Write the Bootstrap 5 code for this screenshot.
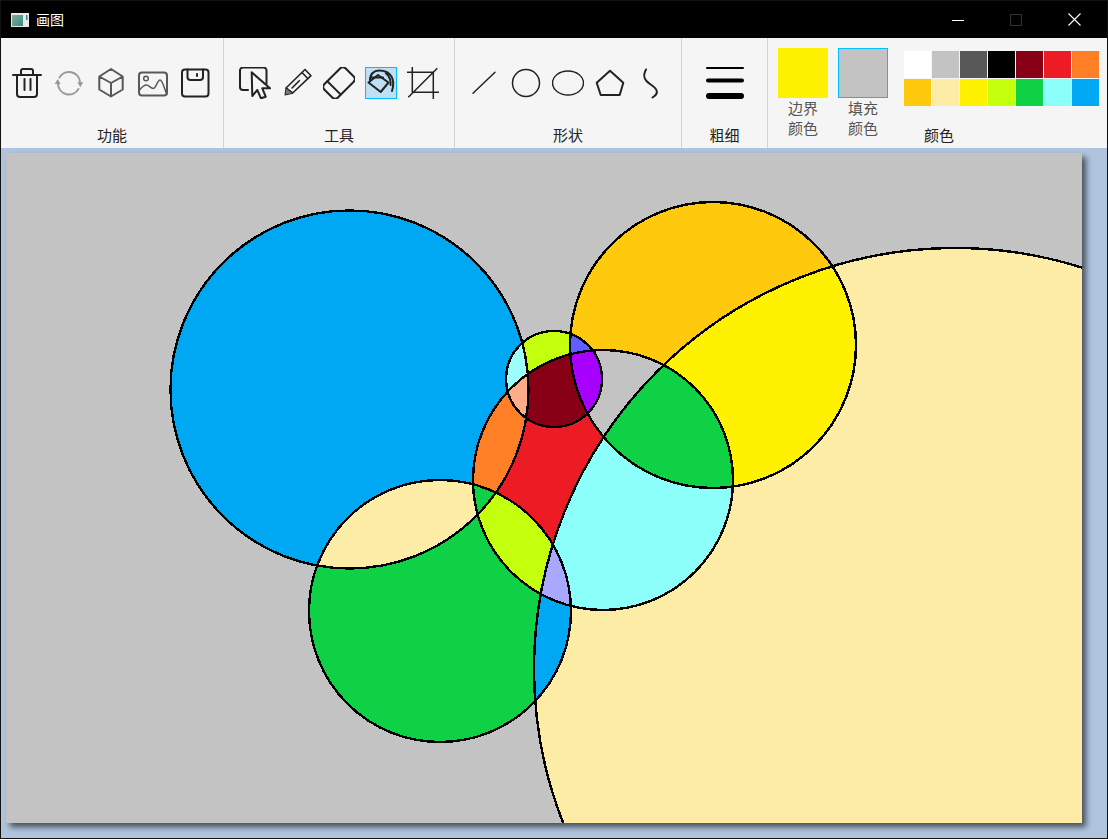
<!DOCTYPE html>
<html lang="zh-CN">

<head>
  <meta charset="UTF-8">
  <meta name="viewport" content="width=device-width, initial-scale=1.0">
  <title>画图</title>
  <link rel="stylesheet" href="https://cdn.jsdelivr.net/npm/bootstrap@5.3.0/dist/css/bootstrap.min.css">
  <style>
    html, body { height: 100%; overflow: hidden; }
    body { font-family: "Noto Sans CJK SC", "Liberation Sans", sans-serif; background: #000; }
    .paint-window { height: 839px; border: 1px solid #111; background: #b0c4de; }
    .title-bar { height: 37px; background: #000; color: #fff; font-size: 14px; padding-left: 10px; }
    .title-bar svg { display: block; }
    .title-text { margin: -2px 0 0 7px; line-height: 1; }
    .win-btn { width: 58px; height: 37px; }
    .tool-bar { height: 110px; background: #f5f5f5; }
    .tool-group { border-right: 1px solid #d3d3d3; padding-top: 29px; }
    .group-a { width: 223px; }
    .group-a .tool-row { margin-right: 2px; }
    .group-b { width: 231px; }
    .group-c { width: 227px; }
    .group-d { width: 86px; }
    .group-label { height: 20px; line-height: 20px; margin-bottom: 3px; font-size: 15px; color: #222; }
    .tool-row { gap: 10px; }
    .tool-btn { width: 32px; height: 32px; border: 1px solid transparent; }
    .tool-btn svg { display: block; width: 32px; height: 32px; margin: -1px; fill: none; stroke: #222; stroke-width: 2; stroke-linecap: round; stroke-linejoin: round; }
    .tool-btn.is-active { background: #bde0f5; border-color: #00bfff; }
    .tool-btn .thin { stroke-width: 1.5; }
    .tool-btn .mid { stroke-width: 1.6; }
    .tool-btn .grey { stroke: #585858; }
    .tool-btn .soft { stroke: #999; }
    .tool-btn .soft-tip { fill: #999; stroke: none; }
    .tool-btn .dark-tip { fill: #777; }
    .size-icon { width: 38px; height: 32px; }
    .color-group { display: grid; }
    .color-group > * { grid-area: 1 / 1; }
    .color-row { padding-left: 10px; }
    .color-label { padding-left: 3px; }
    .swatch-wrap { width: 50px; padding-top: 10px; margin-right: 10px; }
    .swatch-box { width: 50px; height: 50px; }
    .swatch-box.is-active { border: 1px solid #00bfff; }
    .swatch-text { font-size: 15px; line-height: 20px; color: #555; }
    .palette-grid { display: grid; grid-template-columns: repeat(7, 27px); grid-auto-rows: 27px; gap: 1px; margin: 13px 0 0 6px; }
    .palette-cell { display: block; }
    .paper-wrap { padding: 5px 0 0 5px; }
    .paper { display: block; width: 1076px; height: 670px; box-shadow: 4px 4px 6px rgba(0, 0, 0, .6); }
    .edge { fill: none; stroke: #000; stroke-width: 2.4; shape-rendering: crispEdges; }
  </style>
</head>

<body>
  <div class="paint-window d-flex flex-column">
    <div class="title-bar d-flex align-items-center">
      <svg width="18" height="14" viewBox="0 0 18 14">
        <defs>
          <linearGradient id="iconFill" x1="0" y1="0" x2="1" y2="1">
            <stop offset="0" stop-color="#8aa7a0"/>
            <stop offset="1" stop-color="#2f8f7f"/>
          </linearGradient>
        </defs>
        <rect width="18" height="14" fill="#e8e8e8"/>
        <rect x="1" y="2" width="11" height="11" fill="url(#iconFill)"/>
        <rect x="15" y="2" width="1.5" height="5" fill="#3a7f9a"/>
      </svg>
      <span class="title-text">画图</span>
      <div class="d-flex ms-auto me-1">
        <div class="win-btn d-flex align-items-center justify-content-center">
          <svg width="12" height="12" viewBox="0 0 12 12"><path d="M0 6.5H12" stroke="#fff"/></svg>
        </div>
        <div class="win-btn d-flex align-items-center justify-content-center">
          <svg width="12" height="12" viewBox="0 0 12 12"><rect x=".5" y=".5" width="11" height="11" fill="none" stroke="#333"/></svg>
        </div>
        <div class="win-btn d-flex align-items-center justify-content-center">
          <svg width="13" height="13" viewBox="0 0 13 13"><path d="M.5 .5L12.5 12.5M12.5 .5L.5 12.5" stroke="#fff" stroke-width="1.1"/></svg>
        </div>
      </div>
    </div>

    <div class="tool-bar d-flex">
      <section class="tool-group group-a d-flex flex-column align-items-center">
        <div class="tool-row d-flex">
          <div class="tool-btn"><svg viewBox="0 0 32 32"><path d="M2 8H30M10 8V4a2 2 0 0 1 2-2h8a2 2 0 0 1 2 2v4M6 8V27a3 3 0 0 0 3 3h14a3 3 0 0 0 3-3V8M13.5 12V23M19.5 12V23"/></svg></div>
          <div class="tool-btn"><svg viewBox="0 0 32 32"><path class="soft" d="M6.500 10.500A11 11 0 0 1 27 15M25.500 22A11 11 0 0 1 5 17"/><path class="soft-tip" d="M1.700 17H7.700L4.700 12ZM24.300 15.300H30.300L27.300 20.300Z"/></svg></div>
          <div class="tool-btn"><svg viewBox="0 0 32 32"><path class="grey" d="M16 2L27.700 9.500V22.500L16 29.500L4.300 22.500V9.500ZM4.300 9.500L16 16L27.700 9.500M16 16V29.500"/></svg></div>
          <div class="tool-btn"><svg viewBox="0 0 32 32"><rect class="grey" x="2" y="5.500" width="28" height="23" rx="3"/><circle class="grey" cx="9" cy="11.500" r="2.300" stroke-width="1.500"/><path class="grey" stroke-width="1.500" d="M3 22.500C5 20 7.500 18 9.700 18C12 18 13.500 21.500 16.300 21.500C19 21.500 20.500 13 23 13C25.500 13 27.500 22 29.700 27"/></svg></div>
          <div class="tool-btn"><svg viewBox="0 0 32 32"><rect x="3" y="2.500" width="26.500" height="27" rx="3"/><path d="M8.500 2.500V10a3 3 0 0 0 3 3H21a3 3 0 0 0 3-3V2.500M18 7V9"/></svg></div>
        </div>
        <div class="group-label mt-auto">功能</div>
      </section>

      <section class="tool-group group-b d-flex flex-column align-items-center">
        <div class="tool-row d-flex">
          <div class="tool-btn"><svg viewBox="0 0 32 32"><path d="M9 23H4a3 3 0 0 1-3-3V3.500a3 3 0 0 1 3-3H24.500a3 3 0 0 1 3 3V17"/><path d="M12.700 5.300L31 21.300H23.300L26.700 29.700L22 31.300L18.300 23L13.300 29Z"/></svg></div>
          <div class="tool-btn"><svg viewBox="0 0 32 32"><path class="mid" d="M5 21L24 2.500L30 8.700L11.700 26ZM21 5.500L27 11.700M11 21L18.300 13.700"/><path class="dark-tip" stroke-width="1" d="M4 27.700L5 21L11.700 26Z"/></svg></div>
          <div class="tool-btn"><svg viewBox="0 0 32 32"><g transform="rotate(-45 16 16)"><rect x="1" y="6.500" width="30" height="19" rx="4"/><path d="M9 6.500V25.500"/></g></svg></div>
          <div class="tool-btn is-active"><svg viewBox="0 0 32 32"><path d="M13 8L23.500 15.500L15.700 25L3.500 15.500Z"/><path d="M5 13C5 7 9 3.500 14 3.500C20 3.500 24 5.500 26.500 9.500C28.500 13 28.500 19 27 24M5.500 10.500H18M21 6.500C25 9 26 15 25.500 18"/></svg></div>
          <div class="tool-btn"><svg viewBox="0 0 32 32"><path class="thin" stroke-linecap="butt" d="M5.300 0V25.300H32M0 5.300H26.300V32M1.300 30.300L30.300 1.300"/></svg></div>
        </div>
        <div class="group-label mt-auto">工具</div>
      </section>

      <section class="tool-group group-c d-flex flex-column align-items-center">
        <div class="tool-row d-flex">
          <div class="tool-btn"><svg viewBox="0 0 32 32"><path class="thin" d="M5 26.300L27 5.300"/></svg></div>
          <div class="tool-btn"><svg viewBox="0 0 32 32"><circle class="thin" cx="16" cy="16" r="13.500"/></svg></div>
          <div class="tool-btn"><svg viewBox="0 0 32 32"><ellipse class="thin" cx="16" cy="16" rx="15.500" ry="12"/></svg></div>
          <div class="tool-btn"><svg viewBox="0 0 32 32"><path d="M16 3.700L29.300 15.700L25.700 28H6.700L2.700 15.700Z"/></svg></div>
          <div class="tool-btn"><svg viewBox="0 0 32 32"><path d="M10 2.500C6.500 9 8 13 14 17C21 21.500 24 26 16.500 30.500"/></svg></div>
        </div>
        <div class="group-label mt-auto">形状</div>
      </section>

      <section class="tool-group group-d d-flex flex-column align-items-center">
        <svg class="size-icon" viewBox="0 0 38 32" fill="none" stroke="#000" stroke-linecap="round">
          <path d="M1 1H37" stroke-width="2"/>
          <path d="M2 13.500H36" stroke-width="4"/>
          <path d="M3 29H35" stroke-width="6"/>
        </svg>
        <div class="group-label mt-auto">粗细</div>
      </section>

      <section class="color-group flex-grow-1">
        <div class="color-row d-flex">
          <div class="swatch-wrap text-center">
            <div class="swatch-box" style="background:#fff200"></div>
            <div class="swatch-text">边界<br>颜色</div>
          </div>
          <div class="swatch-wrap text-center">
            <div class="swatch-box is-active" style="background:#c3c3c3"></div>
            <div class="swatch-text">填充<br>颜色</div>
          </div>
          <div class="palette-grid align-self-start" id="paletteGrid"></div>
        </div>
        <div class="group-label color-label text-center align-self-end">颜色</div>
      </section>
    </div>

    <div class="paper-wrap flex-grow-1">
      <svg class="paper" viewBox="6 153 1076 670">
        <defs>
          <clipPath id="inA"><circle cx="349.500" cy="389.500" r="179"/></clipPath>
          <clipPath id="inB"><circle cx="713" cy="345" r="143"/></clipPath>
          <clipPath id="inC"><circle cx="554" cy="379" r="48"/></clipPath>
          <clipPath id="inD"><circle cx="603" cy="480" r="130"/></clipPath>
          <clipPath id="inE"><circle cx="440" cy="611" r="131"/></clipPath>
          <clipPath id="inF"><circle cx="955" cy="669" r="421"/></clipPath>
        </defs>
        <rect x="6" y="153" width="1076" height="670" fill="#c3c3c3"/>

        <!-- single shapes -->
        <circle cx="955" cy="669" r="421" fill="#fdeca6"/>
        <circle cx="713" cy="345" r="143" fill="#ffc90e"/>
        <circle cx="349.500" cy="389.500" r="179" fill="#00a8f3"/>
        <circle cx="603" cy="480" r="130" fill="#ed1c24"/>
        <circle cx="440" cy="611" r="131" fill="#0ed145"/>
        <circle cx="554" cy="379" r="48" fill="#c4ff0e"/>

        <!-- overlaps of two -->
        <g clip-path="url(#inF)"><circle cx="713" cy="345" r="143" fill="#fff200"/></g>
        <g clip-path="url(#inD)"><circle cx="713" cy="345" r="143" fill="#c3c3c3"/></g>
        <g clip-path="url(#inF)"><circle cx="603" cy="480" r="130" fill="#8cfffb"/></g>
        <g clip-path="url(#inA)"><circle cx="603" cy="480" r="130" fill="#ff7f27"/></g>
        <g clip-path="url(#inA)"><circle cx="440" cy="611" r="131" fill="#fdeca6"/></g>
        <g clip-path="url(#inD)"><circle cx="440" cy="611" r="131" fill="#c4ff0e"/></g>
        <g clip-path="url(#inF)"><circle cx="440" cy="611" r="131" fill="#00a8f3"/></g>
        <g clip-path="url(#inA)"><circle cx="554" cy="379" r="48" fill="#9cfffb"/></g>
        <g clip-path="url(#inB)"><circle cx="554" cy="379" r="48" fill="#5f5fff"/></g>
        <g clip-path="url(#inD)"><circle cx="554" cy="379" r="48" fill="#880015"/></g>

        <!-- overlaps of three -->
        <g clip-path="url(#inF)"><g clip-path="url(#inD)"><circle cx="713" cy="345" r="143" fill="#0ed145"/></g></g>
        <g clip-path="url(#inA)"><g clip-path="url(#inD)"><circle cx="440" cy="611" r="131" fill="#0ed145"/></g></g>
        <g clip-path="url(#inF)"><g clip-path="url(#inD)"><circle cx="440" cy="611" r="131" fill="#a8a8ff"/></g></g>
        <g clip-path="url(#inB)"><g clip-path="url(#inD)"><circle cx="554" cy="379" r="48" fill="#a800ff"/></g></g>
        <g clip-path="url(#inA)"><g clip-path="url(#inD)"><circle cx="554" cy="379" r="48" fill="#ffac88"/></g></g>

        <circle class="edge" cx="955" cy="669" r="421"/>
        <circle class="edge" cx="713" cy="345" r="143"/>
        <circle class="edge" cx="349.500" cy="389.500" r="179"/>
        <circle class="edge" cx="603" cy="480" r="130"/>
        <circle class="edge" cx="440" cy="611" r="131"/>
        <circle class="edge" cx="554" cy="379" r="48"/>
      </svg>
    </div>
  </div>

  <script src="https://cdn.jsdelivr.net/npm/bootstrap@5.3.0/dist/js/bootstrap.bundle.min.js"></script>
  <script>
    const paletteGrid = document.getElementById('paletteGrid');
    const paletteColors = [
      '#ffffff', '#c3c3c3', '#585858', '#000000', '#880015', '#ed1c24', '#ff7f27',
      '#ffc90e', '#fdeca6', '#fff200', '#c4ff0e', '#0ed145', '#8cfffb', '#00a8f3'
    ];
    paletteGrid.innerHTML = paletteColors.map(color => {
      return `<span class="palette-cell" style="background:${color}"></span>`;
    }).join('');
  </script>
</body>

</html>
